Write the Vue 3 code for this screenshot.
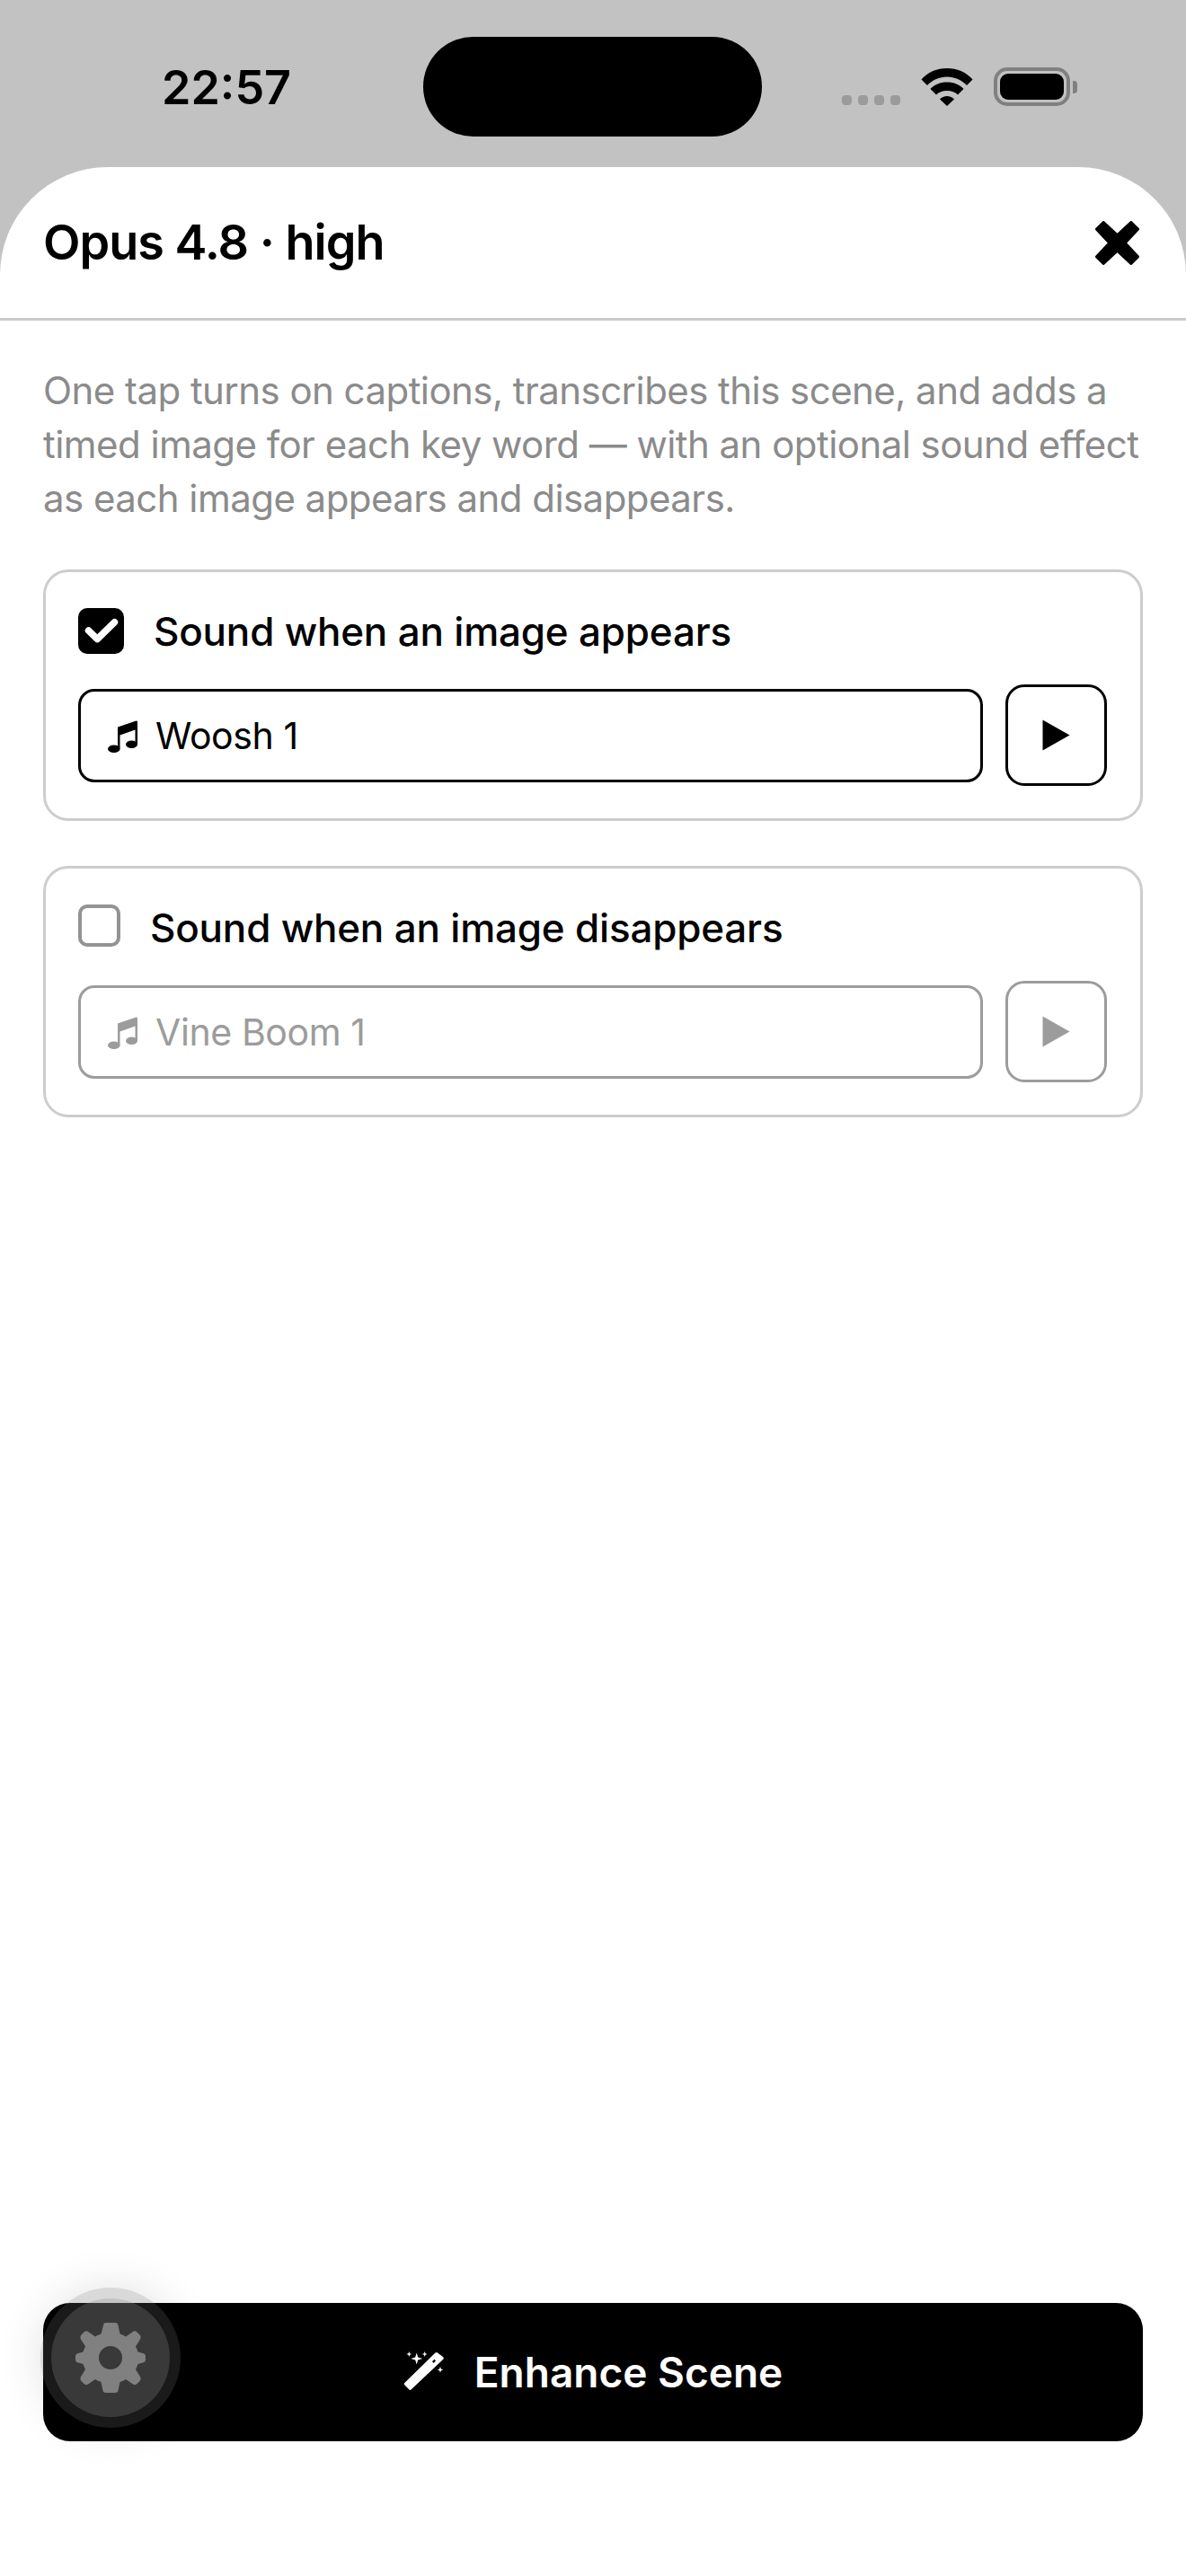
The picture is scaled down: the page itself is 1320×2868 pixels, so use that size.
<script setup>
const cards = [
  { id: 'a', label: 'Sound when an image appears', sound: 'Woosh 1', on: true },
  { id: 'b', label: 'Sound when an image disappears', sound: 'Vine Boom 1', on: false },
]
</script>

<template>
  <div class="screen">
    <div class="status">
      <div class="time">22:57</div>
      <div class="island"></div>
      <div class="indicators">
        <div class="dots"><i></i><i></i><i></i><i></i></div>
        <svg class="wifi" width="58" height="43" viewBox="0 0 58 43">
          <path d="M0.500 13.500C8 5 18 1 29 1s21 4 28.500 12.500L51 20C45 14 37.500 10.500 29 10.500S13 14 7 20Z" />
          <path d="M10.500 24C15 19 21.500 16.500 29 16.500S43 19 47.500 24L41 30.500C38 27.500 34 26 29 26s-9 1.500-12 4.500Z" />
          <path d="M21 35.500C23 33.500 26 32 29 32s6 1.500 8 3.500L29 43Z" />
        </svg>
        <div class="battery"><div class="level"></div></div>
        <div class="nub"></div>
      </div>
    </div>

    <div class="sheet">
      <header class="head">
        <h1>Opus 4.8 · high</h1>
        <svg class="close" width="49" height="49" viewBox="0 0 48 48">
          <path d="M9 1.500L24 15.500L39 1.500L46.500 9L32.500 24L46.500 39L39 46.500L24 32.500L9 46.500L1.500 39L15.500 24L1.500 9Z" fill="#000" stroke="#000" stroke-width="3" stroke-linejoin="round" />
        </svg>
      </header>

      <main class="body">
        <p class="desc">One tap turns on captions, transcribes this scene, and adds a timed image for each key word — with an optional sound effect as each image appears and disappears.</p>

        <section v-for="c in cards" :key="c.id" class="card" :class="{ off: !c.on }">
          <div class="check-row">
            <span class="box">
              <svg v-if="c.on" width="51" height="51" viewBox="0 0 51 51">
                <path d="M11.500 25L21.300 34.500L40.500 15.700" fill="none" stroke="#fff" stroke-width="7.500" stroke-linecap="round" stroke-linejoin="round" />
              </svg>
            </span>
            <span class="label">{{ c.label }}</span>
          </div>
          <div class="pick-row">
            <div class="select">
              <svg class="note" width="33" height="36" viewBox="0 0 33 36">
                <path d="M11 7.500L31.500 0.500Q33 0 33 2V27H30.500V10.500L13.500 16.500V32H11Z" />
                <ellipse cx="6.800" cy="31.700" rx="6.800" ry="4.300" />
                <ellipse cx="26.500" cy="26.700" rx="6.500" ry="4.300" />
              </svg>
              <span>{{ c.sound }}</span>
            </div>
            <div class="play">
              <svg width="31" height="35" viewBox="0 0 31 35"><path d="M0.500 0.500L30.500 17.500L0.500 34.500Z" /></svg>
            </div>
          </div>
        </section>
      </main>

      <footer class="foot">
        <div class="enhance">
          <svg class="wand" width="46" height="46" viewBox="0 0 46 46">
            <path fill-rule="evenodd" d="M1 35.300L35.500 1.500Q37 0.500 38 1.500L44 6Q45.500 7.500 44.500 8.500L8.500 42.500Q7.500 43.500 6.500 42.500L1 37Q0.300 36 1 35.300ZM32 11.300L34.300 8.700L36 10.300L33.700 13Z" />
            <path d="M14.700 1.500L16.200 6.500L21.200 8L16.200 9.500L14.700 14.500L13.200 9.500L8.200 8L13.200 6.500Z" />
            <path d="M6.300 0L7.100 2.200L9.300 3L7.100 3.800L6.300 6L5.500 3.800L3.300 3L5.500 2.200Z" />
            <path d="M23.700 0L24.500 2.200L26.700 3L24.500 3.800L23.700 6L22.900 3.800L20.700 3L22.900 2.200Z" />
            <path d="M41 17L41.900 19.400L44.300 20.300L41.900 21.200L41 23.600L40.100 21.200L37.700 20.300L40.100 19.400Z" />
          </svg>
          <span>Enhance Scene</span>
        </div>
        <div class="fab">
          <div class="fab-inner">
            <svg width="78" height="78" viewBox="-39 -39 78 78">
              <path fill-rule="evenodd" d="M-8 -36Q-8 -39 -5 -39H5Q8 -39 8.500 -36L10.500 -26.500Q14 -25.500 17 -23.500L25 -29Q27.500 -30.500 29.500 -28.500L33 -25Q34.500 -23 33 -20.500L28 -12.500Q29.500 -9.500 30.500 -6.500L36 -5Q39 -4.500 39 -1.500V2Q39 5 36 5.500L30.500 7Q29.500 10 28 13L33 21Q34.500 23.500 33 25.500L29.500 29Q27.500 31 25 29.500L17 24Q14 26 10.500 27L8.500 36.500Q8 39 5 39H-5Q-8 39 -8.500 36.500L-10.500 27Q-14 26 -17 24L-25 29.500Q-27.500 31 -29.500 29L-33 25.500Q-34.500 23.500 -33 21L-28 13Q-29.500 10 -30.500 7L-36 5.500Q-39 5 -39 2V-1.500Q-39 -4.500 -36 -5L-30.500 -6.500Q-29.500 -9.500 -28 -12.500L-33 -20.500Q-34.500 -23 -33 -25L-29.500 -28.500Q-27.500 -30.500 -25 -29L-17 -23.500Q-14 -25.500 -10.500 -26.500ZM13 0A13 13 0 1 0 -13 0A13 13 0 1 0 13 0Z" />
            </svg>
          </div>
        </div>
      </footer>
    </div>
  </div>
</template>

<style>
html, body { margin: 0; background: #fff; }
</style>

<style scoped>
.screen {
  width: 1320px;
  height: 2868px;
  display: flex;
  flex-direction: column;
  background: #c2c2c2;
  font-family: Inter, "Liberation Sans", sans-serif;
  color: #000;
  overflow: hidden;
}
.status {
  height: 186px;
  flex: none;
  display: flex;
  align-items: flex-start;
  padding-left: 180px;
  box-sizing: border-box;
}
.time {
  width: 291px;
  margin-top: 67px;
  font-size: 52px;
  line-height: 62px;
  font-weight: 600;
}
.island {
  width: 377px;
  height: 111px;
  margin-top: 41px;
  border-radius: 56px;
  background: #000;
}
.indicators {
  display: flex;
  align-items: flex-end;
  margin-left: 89px;
  margin-top: 75px;
  height: 43px;
}
.dots { display: flex; gap: 7px; margin-bottom: 1px; }
.dots i {
  width: 11px;
  height: 11px;
  border-radius: 4px;
  background: #9b9b9b;
}
.wifi { margin-left: 23px; fill: #000; }
.battery {
  margin-left: 23px;
  width: 85px;
  height: 43px;
  box-sizing: border-box;
  border: 4px solid #808080;
  border-radius: 15px;
  padding: 3px;
}
.level { height: 100%; border-radius: 9px; background: #000; }
.nub {
  width: 5px;
  height: 14px;
  margin: 0 0 14px 3px;
  border-radius: 0 4px 4px 0;
  background: #808080;
}
.sheet {
  flex: 1;
  display: flex;
  flex-direction: column;
  background: #fff;
  border-radius: 120px 120px 0 0;
}
.head {
  height: 171px;
  flex: none;
  box-sizing: border-box;
  border-bottom: 3px solid #cbcbcb;
  padding: 0 52px 0 48px;
  display: flex;
  align-items: center;
  justify-content: space-between;
}
.head h1 {
  margin: 0;
  font-size: 54px;
  line-height: 66px;
  font-weight: 600;
  letter-spacing: -1px;
}
.body {
  flex: 1;
  padding: 0 48px;
  display: flex;
  flex-direction: column;
}
.desc {
  margin: 48px 0 49px;
  font-size: 42px;
  line-height: 60px;
  letter-spacing: -0.55px;
  color: #8b8b8b;
}
.card {
  height: 280px;
  flex: none;
  box-sizing: border-box;
  margin-bottom: 50px;
  border: 3px solid #cdcdcd;
  border-radius: 28px;
  padding: 40px 37px 0 36px;
}
.check-row {
  display: flex;
  align-items: center;
  height: 51px;
  gap: 33px;
}
.box {
  width: 51px;
  height: 51px;
  flex: none;
  border-radius: 10px;
  background: #000;
  display: flex;
  align-items: center;
  justify-content: center;
}
.label {
  font-size: 44px;
  line-height: 54px;
  font-weight: 450;
  letter-spacing: -0.2px;
}
.pick-row {
  margin-top: 34px;
  display: flex;
  align-items: center;
  gap: 25px;
  color: #000;
}
.select {
  flex: 1;
  height: 104px;
  box-sizing: border-box;
  border: 3px solid currentColor;
  border-radius: 18px;
  padding-left: 30px;
  display: flex;
  align-items: center;
  gap: 20px;
  font-size: 41px;
  letter-spacing: -0.4px;
}
.select span { line-height: 52px; }
.note { fill: currentColor; margin-top: 3px; }
.play {
  width: 113px;
  height: 113px;
  flex: none;
  box-sizing: border-box;
  border: 3px solid currentColor;
  border-radius: 21px;
  display: flex;
  align-items: center;
  justify-content: center;
}
.play svg { fill: currentColor; }
.off .box {
  width: 47px;
  height: 47px;
  box-sizing: border-box;
  background: #fff;
  border: 4px solid #939393;
  align-self: flex-start;
}
.off .pick-row { color: #9c9c9c; }
.foot {
  flex: none;
  height: 304px;
  padding: 0 48px;
  position: relative;
}
.enhance {
  height: 154px;
  border-radius: 30px;
  background: #000;
  color: #fff;
  display: flex;
  align-items: center;
  justify-content: center;
  gap: 33px;
  font-size: 46px;
  font-weight: 600;
}
.wand { fill: #fff; }
.fab {
  position: absolute;
  left: 45px;
  top: -17px;
  width: 156px;
  height: 156px;
  border-radius: 50%;
  background: rgba(104, 104, 104, 0.25);
  box-shadow: 0 0 50px rgba(0, 0, 0, 0.12);
  display: flex;
  align-items: center;
  justify-content: center;
}
.fab-inner {
  width: 132px;
  height: 132px;
  border-radius: 50%;
  background: rgba(141, 141, 141, 0.28);
  display: flex;
  align-items: center;
  justify-content: center;
}
.fab-inner svg { fill: #808080; }
</style>
